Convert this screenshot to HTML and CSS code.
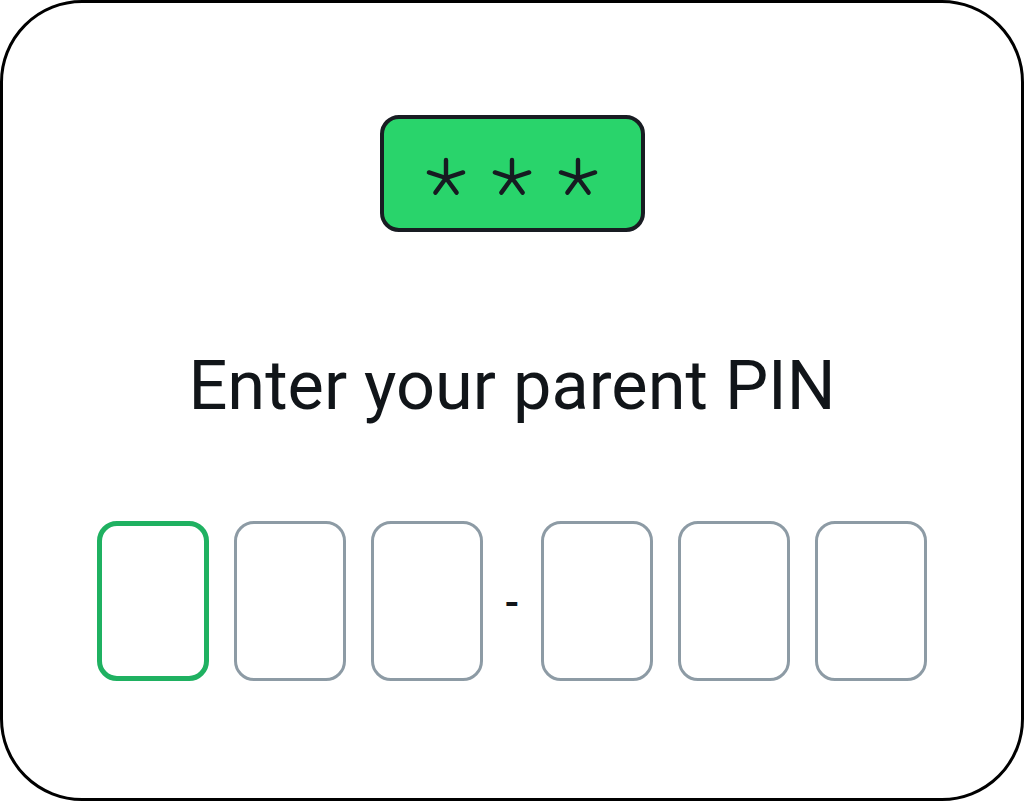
FILE: index.html
```html
<!DOCTYPE html>
<html lang="en">
<head>
<meta charset="utf-8">
<title>Parent PIN</title>
<link rel="stylesheet" href="styles.css">
</head>
<body>
<main class="frame">
  <div class="badge" aria-label="PIN">
    <svg class="stars" width="200" height="50" viewBox="0 0 200 50" aria-hidden="true">
      <g fill="none" stroke="#161b21" stroke-width="4.4" stroke-linecap="round">
        <g transform="translate(34 27)">
          <path d="M0 0V-18M0 0L17.1 -5.6M0 0L10.6 14.6M0 0L-10.6 14.6M0 0L-17.1 -5.6"/>
        </g>
        <g transform="translate(100 27)">
          <path d="M0 0V-18M0 0L17.1 -5.6M0 0L10.6 14.6M0 0L-10.6 14.6M0 0L-17.1 -5.6"/>
        </g>
        <g transform="translate(166 27)">
          <path d="M0 0V-18M0 0L17.1 -5.6M0 0L10.6 14.6M0 0L-10.6 14.6M0 0L-17.1 -5.6"/>
        </g>
      </g>
    </svg>
  </div>
  <h1 class="title">Enter your parent PIN</h1>
  <div class="pin-row">
    <div class="cell cell-active"></div>
    <div class="cell"></div>
    <div class="cell"></div>
    <div class="sep">-</div>
    <div class="cell"></div>
    <div class="cell"></div>
    <div class="cell"></div>
  </div>
</main>
</body>
</html>
```

FILE: styles.css
```css
* { box-sizing: border-box; }
html, body { margin: 0; padding: 0; background: #ffffff; }
body { width: 1024px; height: 801px; overflow: hidden; }

.frame {
  width: 1024px;
  height: 801px;
  border: 3px solid #000000;
  border-radius: 82px;
  display: flex;
  flex-direction: column;
  align-items: center;
  padding-top: 112px;
  font-family: Roboto, "Noto Sans", sans-serif;
  color: #111519;
}

.badge {
  flex-shrink: 0;
  width: 265px;
  height: 117px;
  background: #29d46b;
  border: 4px solid #181c22;
  border-radius: 19px;
  display: flex;
  align-items: center;
  justify-content: center;
}
.stars { display: block; margin-top: 4px; }

.title {
  flex-shrink: 0;
  margin: 114px 0 0;
  font-size: 68.5px;
  font-weight: 400;
  line-height: 80px;
  letter-spacing: 0;
  color: #111519;
}

.pin-row {
  flex-shrink: 0;
  margin-top: 95px;
  display: flex;
  align-items: center;
  gap: 25px;
}

.cell {
  flex-shrink: 0;
  width: 112px;
  height: 160px;
  border: 3px solid #8d9ba5;
  border-radius: 20px;
}
.cell-active {
  border: 5px solid #1fb161;
}

.sep {
  width: 8px;
  display: flex;
  justify-content: center;
  font-size: 42px;
  line-height: 40px;
  font-weight: 500;
  color: #111519;
  margin-top: 4px;
}
```
